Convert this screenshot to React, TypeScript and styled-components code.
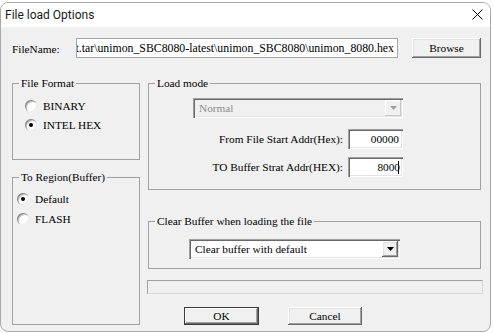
import React from "react";
import styled, { createGlobalStyle, css } from "styled-components";

const Global = createGlobalStyle`
  html, body { margin: 0; padding: 0; background: #fff; }
  body { font-family: "Liberation Serif", "Times New Roman", serif; }
  * { box-sizing: border-box; }
`;

const sunken = css`
  box-shadow: inset 1px 1px 0 #a0a0a0, inset 2px 2px 0 #696969,
    inset -1px -1px 0 #fff, inset -2px -2px 0 #e3e3e3;
`;

const raised = css`
  box-shadow: inset -1px -1px 0 #696969, inset 1px 1px 0 #fff,
    inset -2px -2px 0 #a0a0a0, inset 2px 2px 0 #e3e3e3;
`;

const Window = styled.div`
  margin-top: 2px;
  width: 491px;
  height: 330px;
  border: 1px solid #a8a8a8;
  border-radius: 8px;
  overflow: hidden;
  display: flex;
  flex-direction: column;
  background: #f0f0f0;
`;

const TitleBar = styled.div`
  height: 24px;
  flex: none;
  background: #fff;
  display: flex;
  align-items: center;
  justify-content: space-between;
  padding: 0 7px 1px 4px;
  font-family: Roboto, "Noto Sans", sans-serif;
  font-size: 12px;
  color: #1a1a1a;
`;

const CloseIcon = styled.svg`
  display: block;
`;

const Body = styled.div`
  flex: 1;
  padding: 11px 8px 0 11px;
  font-family: "Liberation Serif", "Times New Roman", serif;
  font-size: 11.3px;
  color: #000;
`;

const FileRow = styled.div`
  display: flex;
  align-items: center;
  height: 20px;
`;

const FieldLabel = styled.span`
  width: 64px;
  flex: none;
  padding-top: 2px;
`;

const PathBox = styled.div`
  width: 322px;
  height: 20px;
  flex: none;
  border: 1px solid #a6a6a6;
  background: #fff;
  display: flex;
  align-items: center;
  justify-content: flex-end;
  overflow: hidden;
  padding-right: 3px;
  white-space: nowrap;
  font-size: 11.8px;
`;

const PathText = styled.span`
  flex: none;
`;

const Button = styled.button<{ $w: number; $h: number; $ml: number; $default?: boolean }>`
  width: ${(p) => p.$w}px;
  height: ${(p) => p.$h}px;
  margin-left: ${(p) => p.$ml}px;
  flex: none;
  font-family: "Liberation Serif", "Times New Roman", serif;
  font-size: 11.3px;
  color: #000;
  background: #f0f0f0;
  border: none;
  padding: 0;
  ${raised}
  ${(p) =>
    p.$default &&
    css`
      box-shadow: inset 0 0 0 1px #3c3c3c, inset -2px -2px 0 #696969,
        inset 2px 2px 0 #fff, inset -3px -3px 0 #a0a0a0;
    `}
`;

const Main = styled.div`
  margin-top: 18px;
  display: grid;
  grid-template-columns: 128px 333px;
  column-gap: 8px;
`;

const Column = styled.div`
  display: flex;
  flex-direction: column;
`;

const Group = styled.fieldset<{ $h: number; $mt?: number }>`
  margin: ${(p) => p.$mt ?? 0}px 0 0 0;
  padding: 0;
  height: ${(p) => p.$h}px;
  border: 1px solid #a0a0a0;
  min-inline-size: 0;
`;

const Legend = styled.legend`
  margin-left: 6px;
  padding: 0 2px;
  line-height: 14px;
  height: 14px;
`;

const RadioList = styled.div<{ $mt: number; $gap: number }>`
  display: flex;
  flex-direction: column;
  margin-top: ${(p) => p.$mt}px;
  gap: ${(p) => p.$gap}px;
`;

const RadioRow = styled.div<{ $indent: number }>`
  display: flex;
  align-items: center;
  height: 16px;
  padding-left: ${(p) => p.$indent}px;
  gap: 6px;
`;

const RadioDot = styled.span<{ $checked?: boolean }>`
  width: 12px;
  height: 12px;
  flex: none;
  border-radius: 50%;
  background: #fff;
  position: relative;
  box-shadow: inset 1px 1px 0 #8a8a8a, inset 2px 2px 0 #c8c8c8,
    inset -1px -1px 0 #ececec;
  ${(p) =>
    p.$checked &&
    css`
      &::after {
        content: "";
        position: absolute;
        left: 4px;
        top: 4px;
        width: 4px;
        height: 4px;
        border-radius: 50%;
        background: #000;
      }
    `}
`;

const Combo = styled.div<{ $disabled?: boolean; $w: number; $ml: number; $mt: number }>`
  width: ${(p) => p.$w}px;
  height: 20px;
  margin: ${(p) => p.$mt}px 0 0 ${(p) => p.$ml}px;
  display: flex;
  align-items: center;
  padding: 2px;
  background: ${(p) => (p.$disabled ? "#f0f0f0" : "#fff")};
  color: ${(p) => (p.$disabled ? "#8c8c8c" : "#000")};
  ${sunken}
`;

const ComboText = styled.span`
  flex: 1;
  padding-left: 4px;
  white-space: nowrap;
`;

const ComboArrow = styled.span<{ $disabled?: boolean }>`
  width: 16px;
  height: 16px;
  flex: none;
  display: flex;
  align-items: center;
  justify-content: center;
  background: #f0f0f0;
  ${(p) =>
    p.$disabled
      ? css`
          box-shadow: inset -1px -1px 0 #c8c8c8, inset 1px 1px 0 #fff;
        `
      : raised}
`;

const LoadInner = styled.div`
  margin: 8px 0 0 44px;
  width: 210px;
  display: flex;
  flex-direction: column;
  align-items: flex-end;
`;

const AddrRow = styled.div<{ $mt: number }>`
  display: flex;
  align-items: center;
  gap: 5px;
  margin-top: ${(p) => p.$mt}px;
  white-space: nowrap;
`;

const AddrInput = styled.div`
  width: 55px;
  height: 20px;
  background: #fff;
  display: flex;
  align-items: center;
  justify-content: flex-end;
  padding: 0 4px 0 0;
  ${sunken}
`;

const Caret = styled.span`
  width: 1px;
  height: 13px;
  background: #000;
  margin-left: -2px;
`;

const StatusBox = styled.div`
  margin: 11px 0 0 -1px;
  width: 336px;
  height: 14px;
  border: 1px solid;
  border-color: #a0a0a0 #d8d8d8 #d8d8d8 #a0a0a0;
`;

const ButtonRow = styled.div`
  margin-top: 13px;
  display: flex;
`;

const Arrow = ({ color }: { color: string }) => (
  <svg width="7" height="4" viewBox="0 0 7 4">
    <polygon points="0,0 7,0 3.5,4" fill={color} />
  </svg>
);

export default function App() {
  return (
    <>
      <Global />
      <Window>
        <TitleBar>
          <span>File load Options</span>
          <CloseIcon width="11" height="11" viewBox="0 0 11 11">
            <path d="M0.5 0.5 L10.5 10.5 M10.5 0.5 L0.5 10.5" stroke="#000" strokeWidth="1" />
          </CloseIcon>
        </TitleBar>
        <Body>
          <FileRow>
            <FieldLabel>FileName:</FieldLabel>
            <PathBox>
              <PathText>st.tar\unimon_SBC8080-latest\unimon_SBC8080\unimon_8080.hex</PathText>
            </PathBox>
            <Button $w={69} $h={20} $ml={14}>
              Browse
            </Button>
          </FileRow>
          <Main>
            <Column>
              <Group $h={84}>
                <Legend>File Format</Legend>
                <RadioList $mt={8} $gap={3}>
                  <RadioRow $indent={12}>
                    <RadioDot />
                    <span>BINARY</span>
                  </RadioRow>
                  <RadioRow $indent={12}>
                    <RadioDot $checked />
                    <span>INTEL HEX</span>
                  </RadioRow>
                </RadioList>
              </Group>
              <Group $h={155} $mt={10}>
                <Legend>To Region(Buffer)</Legend>
                <RadioList $mt={7} $gap={4}>
                  <RadioRow $indent={4}>
                    <RadioDot $checked />
                    <span>Default</span>
                  </RadioRow>
                  <RadioRow $indent={4}>
                    <RadioDot />
                    <span>FLASH</span>
                  </RadioRow>
                </RadioList>
              </Group>
            </Column>
            <Column>
              <Group $h={114}>
                <Legend>Load mode</Legend>
                <LoadInner>
                  <Combo $disabled $w={210} $ml={0} $mt={0}>
                    <ComboText>Normal</ComboText>
                    <ComboArrow $disabled>
                      <Arrow color="#a0a0a0" />
                    </ComboArrow>
                  </Combo>
                  <AddrRow $mt={11}>
                    <span>From File Start Addr(Hex):</span>
                    <AddrInput>00000</AddrInput>
                  </AddrRow>
                  <AddrRow $mt={8}>
                    <span>TO Buffer Strat Addr(HEX):</span>
                    <AddrInput>
                      8000
                      <Caret />
                    </AddrInput>
                  </AddrRow>
                </LoadInner>
              </Group>
              <Group $h={55} $mt={24}>
                <Legend>Clear Buffer when loading the file</Legend>
                <Combo $w={211} $ml={40} $mt={11}>
                  <ComboText>Clear buffer with default</ComboText>
                  <ComboArrow>
                    <Arrow color="#000" />
                  </ComboArrow>
                </Combo>
              </Group>
              <StatusBox />
              <ButtonRow>
                <Button $w={75} $h={18} $ml={36} $default>
                  OK
                </Button>
                <Button $w={74} $h={18} $ml={29}>
                  Cancel
                </Button>
              </ButtonRow>
            </Column>
          </Main>
        </Body>
      </Window>
    </>
  );
}
